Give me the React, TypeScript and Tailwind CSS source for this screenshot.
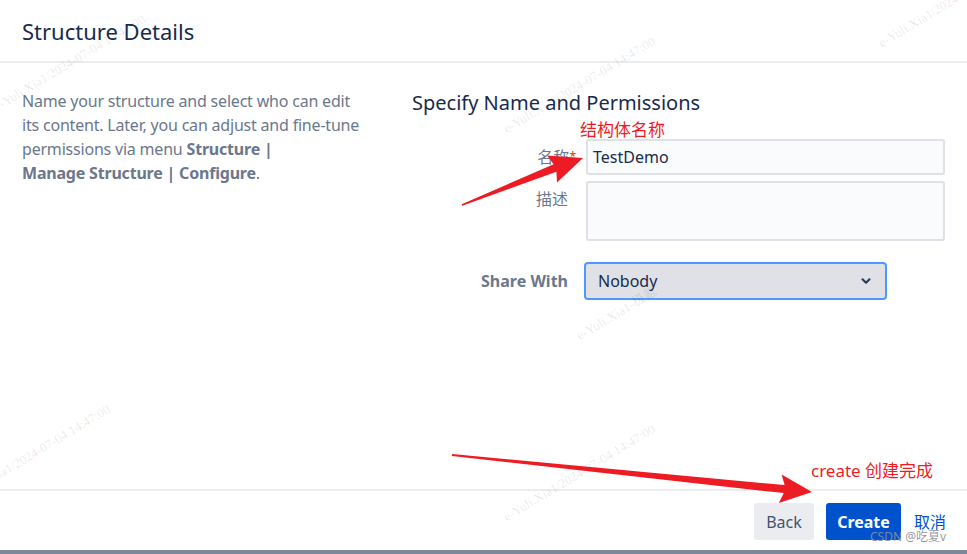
import { ChevronDown } from "lucide-react"

const font = { fontFamily: '"Noto Sans", "Noto Sans CJK SC", sans-serif' }

// faint watermark lines over the page
const MARKS = [
  { text: "e-Yuli.Xia1/2024-07-04 14:47:00", left: -5, top: 100 },
  { text: "e-Yuli.Xia1/2024-07-04 14:47:00", left: 505, top: 122 },
  { text: "e-Yuli.Xia1-极氪", left: 578, top: 329 },
  { text: "e-Yuli.Xia1/2024-07-04 14:47:00", left: -40, top: 490 },
  { text: "e-Yuli.Xia1/2024-07-04 14:47:00", left: 505, top: 510 },
  { text: "e-Yuli.Xia1/2024-07-04 14:47:00", left: 880, top: 36 },
]

function Arrows() {
  return (
    <svg className="absolute inset-0 pointer-events-none" width="967" height="554" viewBox="0 0 967 554">
      <polygon
        fill="#ed1c24"
        points="462.3,205.8 556.4,171.7 557,182.5 583,158 547,155.5 553.6,164.3 461.7,204.2"
      />
      <polygon
        fill="#ed1c24"
        points="451.9,456 783.8,493.1 778.8,503 812,492 781.6,474.5 784.6,485.1 452.1,454"
      />
    </svg>
  )
}

export default function App() {
  return (
    <div className="relative w-[967px] h-[554px] overflow-hidden bg-white" style={font}>
      <div className="flex flex-col h-full">
        {/* ---------- header ---------- */}
        <div className="h-[63px] flex items-center px-[22px] border-b-2 border-[#ebecf0]">
          <h1 className="text-[22px] text-[#172b4d] leading-none">Structure Details</h1>
        </div>

        {/* ---------- body ---------- */}
        <div className="flex-1 flex pt-[26px]">
          <div className="w-[390px] pl-[22px] pr-[20px] text-[16px] leading-[24px] text-[#6b778c] tracking-[-0.2px]">
            Name your structure and select who can edit its content. Later, you can adjust and fine-tune
            permissions via menu <b className="font-bold">Structure |</b>
            <br />
            <b className="font-bold">Manage Structure | Configure</b>.
          </div>

          <div className="flex-1 pl-[22px] relative">
            <h2 className="text-[20px] leading-[28px] text-[#172b4d]">Specify Name and Permissions</h2>
            <div className="h-[22px] pl-[168px] text-[17px] leading-[22px] text-[#ed1c24] mt-[2px]">
              结构体名称
            </div>

            <div className="flex items-start mt-[-2px]">
              <div className="w-[164px] text-right text-[16px] text-[#6b778c] pt-[6px] leading-[24px]">
                名称<span className="text-[#de350b] text-[12px] align-top">*</span>
              </div>
              <div className="ml-[10px] w-[359px] h-[36px] bg-[#fafbfc] border-2 border-[#dfe1e6] rounded-[3px] px-[5px] flex items-center text-[16px] text-[#172b4d]">
                TestDemo
              </div>
            </div>

            <div className="flex items-start mt-[6px]">
              <div className="w-[164px] text-right text-[16px] text-[#6b778c] pt-[6px] leading-[24px] pr-[8px]">
                描述
              </div>
              <div className="ml-[10px] w-[359px] h-[60px] bg-[#fafbfc] border-2 border-[#dfe1e6] rounded-[3px]" />
            </div>

            <div className="flex items-center mt-[21px]">
              <div className="w-[156px] text-right text-[16px] font-bold text-[#6b778c]">Share With</div>
              <div className="ml-[16px] w-[303px] h-[38px] bg-[#dfe1e6] border-2 border-[#4c9aff] rounded-[4px] pl-[12px] pr-[12px] flex items-center justify-between text-[16px] text-[#172b4d]">
                <span>Nobody</span>
                <ChevronDown size={14} strokeWidth={3.5} className="text-[#253858]" />
              </div>
            </div>
          </div>
        </div>

        {/* ---------- footer ---------- */}
        <div className="relative h-[61px] border-t-2 border-[#ebecf0] flex items-start justify-end pr-[20px] pt-[12px] gap-[12px]">
          <div className="absolute left-[811px] -top-[31px] text-[17px] text-[#ed1c24] leading-[22px]">
            create 创建完成
          </div>
          <button className="h-[37px] w-[60px] rounded-[3px] bg-[#ebecf0] text-[#42526e] text-[16px]">Back</button>
          <button className="h-[37px] w-[75px] rounded-[3px] bg-[#0052cc] text-white text-[16px] font-bold">Create</button>
          <button className="h-[37px] w-[34px] text-[#0052cc] text-[16px]">取消</button>
        </div>
        <div className="h-[4px] bg-[#7d889c]" />
      </div>

      {MARKS.map((m, i) => (
        <span
          key={i}
          className="absolute whitespace-nowrap text-[13px] leading-[16px] text-black/10 -rotate-[31deg] origin-left pointer-events-none"
          style={{ left: m.left, top: m.top, fontFamily: '"Liberation Serif", "Noto Sans CJK SC", serif' }}
        >
          {m.text}
        </span>
      ))}

      <Arrows />

      <span className="absolute left-[870px] top-[529px] text-[12px] leading-[16px] text-[#8a8f99]/90">CSDN @吃夏v</span>
    </div>
  )
}
